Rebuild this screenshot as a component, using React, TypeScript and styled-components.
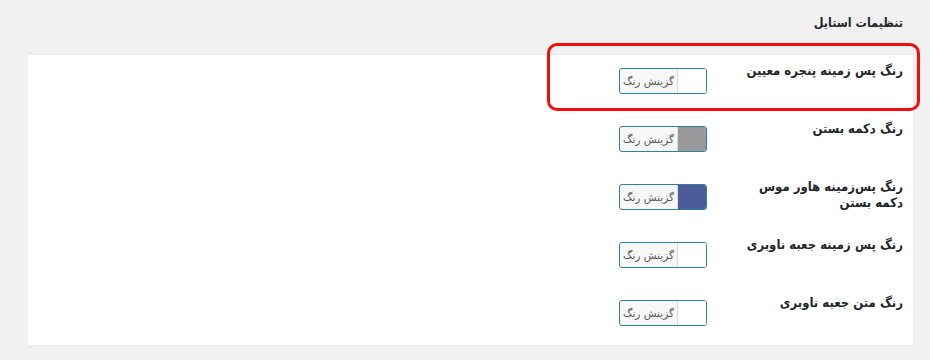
import React from "react";
import styled, { createGlobalStyle } from "styled-components";

const GlobalStyle = createGlobalStyle`
  html, body {
    margin: 0;
    padding: 0;
    background: #f1f1f1;
  }
  body {
    font-family: Tahoma, "DejaVu Sans", "Noto Sans", sans-serif;
    color: #23282d;
  }
`;

const Page = styled.div`
  direction: rtl;
  width: 930px;
  height: 360px;
  box-sizing: border-box;
  padding: 0 17px 0 17px;
  overflow: hidden;
`;

const Title = styled.h2`
  margin: 0;
  padding: 15px 10px 0 0;
  height: 55px;
  box-sizing: border-box;
  font-family: "DejaVu Sans Condensed", "DejaVu Sans", sans-serif;
  font-size: 12.5px;
  font-weight: 600;
  color: #23282d;
`;

const Panel = styled.div`
  background: #fff;
  margin-left: 11px;
  height: 290px;
  display: flex;
  flex-direction: column;
  box-shadow: 0 0 0 1px #ececec;
`;

const Row = styled.div`
  position: relative;
  height: 58px;
  box-sizing: border-box;
  padding-top: 13px;
  display: grid;
  grid-template-columns: 196px 1fr;
  align-items: start;
`;

const Label = styled.div`
  padding: 0 10px 0 22px;
  margin-top: -5px;
  font-family: "DejaVu Sans Condensed", "DejaVu Sans", sans-serif;
  font-size: 13px;
  font-weight: bold;
  line-height: 16px;
  color: #23282d;
`;

const Field = styled.div`
  padding-right: 10px;
`;

const ColorButton = styled.button`
  display: flex;
  flex-direction: row;
  width: 88px;
  height: 26px;
  padding: 0;
  margin: 0;
  border: 1px solid #2f7ea6;
  border-radius: 3px;
  overflow: hidden;
  background: #f7f7f7;
  cursor: pointer;
  box-sizing: border-box;
`;

const Swatch = styled.span<{ $color: string }>`
  width: 28px;
  height: 100%;
  background: ${props => props.$color};
  border-left: 1px solid #dcdcdc;
`;

const ButtonText = styled.span`
  flex: 1;
  display: flex;
  align-items: center;
  justify-content: center;
  font-family: Tahoma, "DejaVu Sans", sans-serif;
  font-size: 10.5px;
  color: #555;
  padding-bottom: 1px;
`;

const Highlight = styled.div`
  position: absolute;
  top: -12px;
  right: -7px;
  width: 373px;
  height: 68px;
  box-sizing: border-box;
  border: 3px solid #f20d0d;
  border-radius: 10px;
  pointer-events: none;
`;

const settings = [
  { label: "رنگ پس زمینه پنجره معیین", color: "#ffffff", marked: true },
  { label: "رنگ دکمه بستن", color: "#99999b" },
  { label: "رنگ پس‌زمینه هاور موس دکمه بستن", color: "#4b5c98" },
  { label: "رنگ پس زمینه جعبه ناوبری", color: "#ffffff" },
  { label: "رنگ متن جعبه ناوبری", color: "#ffffff" },
];

export default function App() {
  return (
    <>
      <GlobalStyle />
      <Page>
        <Title>تنظیمات استایل</Title>
        <Panel>
          {settings.map(item => (
            <Row key={item.label}>
              <Label>{item.label}</Label>
              <Field>
                <ColorButton type="button">
                  <Swatch $color={item.color} />
                  <ButtonText>گزینش رنگ</ButtonText>
                </ColorButton>
              </Field>
              {item.marked && <Highlight />}
            </Row>
          ))}
        </Panel>
      </Page>
    </>
  );
}
